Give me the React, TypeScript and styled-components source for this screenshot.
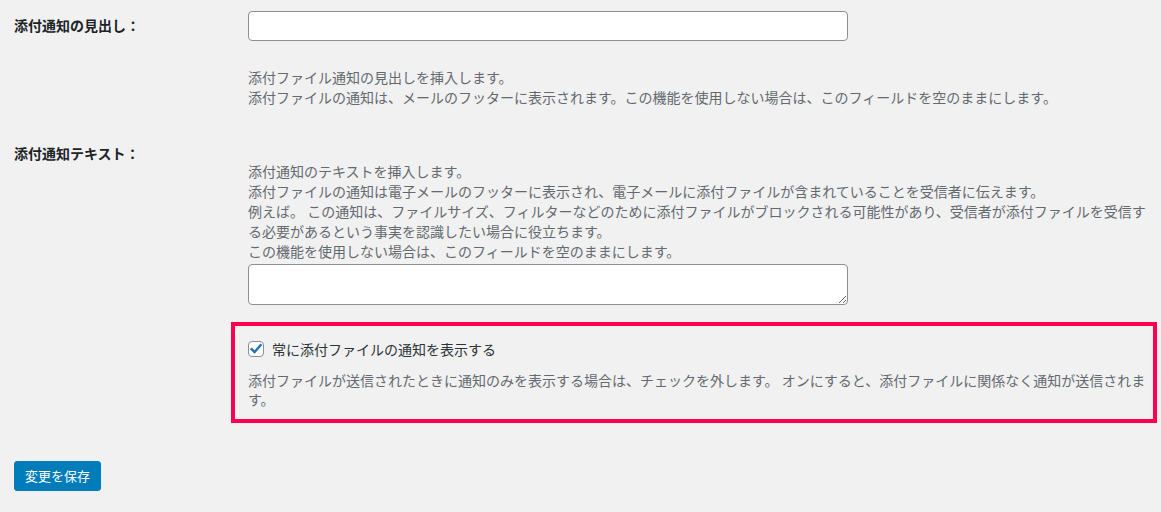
import React from "react";
import styled, { createGlobalStyle } from "styled-components";

const GlobalStyle = createGlobalStyle`
  html, body {
    margin: 0;
    padding: 0;
    background: #f1f1f1;
  }
  body {
    font-family: "Noto Sans CJK JP", "Noto Sans", sans-serif;
    font-size: 14px;
    color: #1d2327;
  }
`;

const App = () => {
  return (
    <>
      <GlobalStyle />
      <Page>
        <Row>
          <Th $top={15}>添付通知の見出し：</Th>
          <Td $top={11}>
            <TextInput type="text" />
            <Description $gap={26}>
              添付ファイル通知の見出しを挿入します。
              <br />
              添付ファイルの通知は、メールのフッターに表示されます。この機能を使用しない場合は、このフィールドを空のままにします。
            </Description>
          </Td>
        </Row>

        <Row>
          <Th $top={36}>添付通知テキスト：</Th>
          <Td $top={54}>
            <Description $gap={0}>
              添付通知のテキストを挿入します。
              <br />
              添付ファイルの通知は電子メールのフッターに表示され、電子メールに添付ファイルが含まれていることを受信者に伝えます。
              <br />
              例えば。 この通知は、ファイルサイズ、フィルターなどのために添付ファイルがブロックされる可能性があり、受信者が添付ファイルを受信す
              <br />
              る必要があるという事実を認識したい場合に役立ちます。
              <br />
              この機能を使用しない場合は、このフィールドを空のままにします。
            </Description>
            <TextArea />
          </Td>
        </Row>

        <Row>
          <Th $top={0} />
          <Highlight>
            <CheckLabel>
              <CheckBox>
                <svg width="14" height="14" viewBox="0 0 14 14">
                  <path
                    d="M2.6 7.2 L5.6 10.1 L11.6 3.2"
                    fill="none"
                    stroke="#2271b1"
                    strokeWidth="2.4"
                    strokeLinecap="square"
                    strokeLinejoin="miter"
                  />
                </svg>
              </CheckBox>
              常に添付ファイルの通知を表示する
            </CheckLabel>
            <Note>
              添付ファイルが送信されたときに通知のみを表示する場合は、チェックを外します。 オンにすると、添付ファイルに関係なく通知が送信されま
              <br />
              す。
            </Note>
          </Highlight>
        </Row>

        <SaveButton type="button">変更を保存</SaveButton>
      </Page>
    </>
  );
};

export default App;

const Page = styled.div`
  padding: 0 4px 0 14px;
  width: 1161px;
  box-sizing: border-box;
`;

const Row = styled.div`
  display: grid;
  grid-template-columns: 217px 1fr;
  align-items: start;

  &:nth-of-type(3) {
    margin-top: 17px;
  }
`;

const Th = styled.div<{ $top: number }>`
  padding-top: ${(p) => p.$top}px;
  font-weight: bold;
  font-size: 14px;
  line-height: 20px;
  color: #1d2327;
`;

const Td = styled.div<{ $top: number }>`
  padding: ${(p) => p.$top}px 0 0 17px;
`;

const TextInput = styled.input`
  display: block;
  box-sizing: border-box;
  width: 600px;
  height: 30px;
  margin: 0;
  padding: 0 8px;
  border: 1px solid #8c8f94;
  border-radius: 4px;
  background: #fff;
  font: inherit;
`;

const TextArea = styled.textarea`
  display: block;
  box-sizing: border-box;
  width: 600px;
  height: 41px;
  margin: 3px 0 0;
  padding: 2px 6px;
  border: 1px solid #8c8f94;
  border-radius: 4px;
  background: #fff;
  font: inherit;
`;

const Description = styled.p<{ $gap: number }>`
  margin: ${(p) => p.$gap}px 0 0;
  font-size: 14px;
  line-height: 20px;
  color: #646970;
  white-space: nowrap;
`;

const Highlight = styled.div`
  border: 4px solid #ff0050;
  padding: 15px 0 11px 13px;
`;

const CheckLabel = styled.label`
  display: flex;
  align-items: center;
  gap: 8px;
  height: 16px;
  font-size: 14px;
  color: #2c3338;
`;

const CheckBox = styled.span`
  display: flex;
  align-items: center;
  justify-content: center;
  box-sizing: border-box;
  width: 16px;
  height: 16px;
  border: 1px solid #8c8f94;
  border-radius: 4px;
  background: #fff;
`;

const Note = styled.p`
  margin: 14px 0 0;
  font-size: 14px;
  line-height: 18.5px;
  color: #646970;
  white-space: nowrap;
`;

const SaveButton = styled.button`
  display: block;
  margin-top: 38px;
  height: 30px;
  padding: 0 10px;
  border: 1px solid #007cba;
  border-radius: 3px;
  background: #007cba;
  color: #fff;
  font-family: "Noto Sans CJK JP", sans-serif;
  font-size: 13px;
  line-height: 28px;
  cursor: pointer;
`;
